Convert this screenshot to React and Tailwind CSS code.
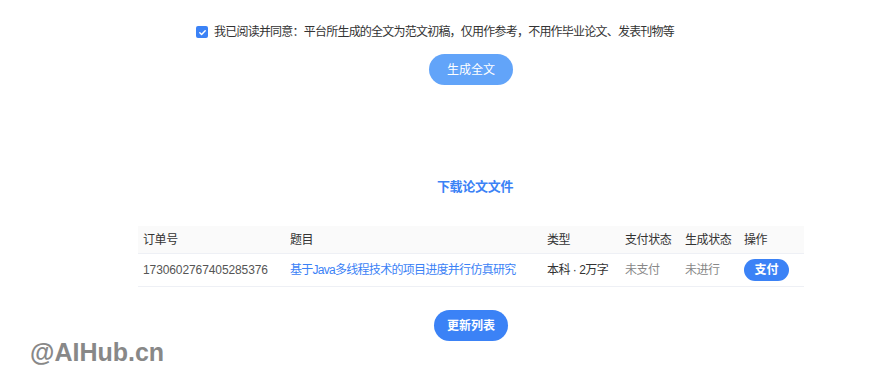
import React from 'react';

const font = { fontFamily: '"Liberation Sans", "Noto Sans CJK SC", sans-serif' };

const orders = [
  {
    id: '1730602767405285376',
    title: '基于Java多线程技术的项目进度并行仿真研究',
    type: '本科 · 2万字',
    pay: '未支付',
    gen: '未进行',
  },
];

const App = () => {
  return (
    <div className="relative w-[873px] h-[391px] bg-white overflow-hidden" style={font}>
      <div className="ml-[138px] w-[666px] flex flex-col">
        {/* agreement */}
        <div className="pt-[23px] pl-[58px] flex items-center h-[41px]">
          <span className="w-[12px] h-[12px] rounded-[2px] bg-[#3b82f6] flex items-center justify-center">
            <svg width="9" height="9" viewBox="0 0 10 10" fill="none">
              <path d="M2 5.2l2 2 4-4.2" stroke="#fff" strokeWidth="1.6" strokeLinecap="round" strokeLinejoin="round" />
            </svg>
          </span>
          <span className="ml-[6px] text-[12px] leading-[18px] tracking-[-0.78px] text-[#333] whitespace-nowrap">
            我已阅读并同意：平台所生成的全文为范文初稿，仅用作参考，不用作毕业论文、发表刊物等
          </span>
        </div>

        <div className="flex justify-center mt-[13px]">
          <button className="w-[84px] h-[31px] rounded-full bg-[#62a4f9] text-white text-[12px]">
            生成全文
          </button>
        </div>

        <h2 className="mt-[92px] h-[20px] leading-[20px] text-center pl-[8px] text-[13px] tracking-[-0.3px] font-bold text-[#3b82f6]">
          下载论文文件
        </h2>

        {/* table */}
        <div className="mt-[29px] text-[12px]">
          <div className="grid grid-cols-[147px_257px_78px_60px_59px_1fr] pl-[5px] h-[28px] items-center bg-[#fafafa] text-[#333] border-b border-[#eef0f5] tracking-[-0.4px]">
            <div>订单号</div>
            <div>题目</div>
            <div>类型</div>
            <div>支付状态</div>
            <div>生成状态</div>
            <div>操作</div>
          </div>
          {orders.map((o) => (
            <div
              key={o.id}
              className="grid grid-cols-[147px_257px_78px_60px_59px_1fr] pl-[5px] h-[33px] items-center border-b border-[#eef0f5]"
            >
              <div className="text-[#555] tracking-[-0.1px]">{o.id}</div>
              <div className="text-[#3b82f6] whitespace-nowrap tracking-[-0.72px]">{o.title}</div>
              <div className="text-[#333] whitespace-nowrap tracking-[-0.5px]">{o.type}</div>
              <div className="text-[#888] tracking-[-0.5px]">{o.pay}</div>
              <div className="text-[#888] tracking-[-0.5px]">{o.gen}</div>
              <div>
                <button className="w-[45px] h-[22px] rounded-full bg-[#3b82f6] text-white text-[12px] font-bold">
                  支付
                </button>
              </div>
            </div>
          ))}
        </div>

        <div className="flex justify-center mt-[23px]">
          <button className="w-[74px] h-[31px] rounded-full bg-[#3b82f6] text-white text-[12px] font-bold">
            更新列表
          </button>
        </div>
      </div>

      <div className="absolute left-[30px] top-[336px] text-[25px] font-bold text-[#888] leading-[32px]">
        @AIHub.cn
      </div>
    </div>
  );
};

export default App;
